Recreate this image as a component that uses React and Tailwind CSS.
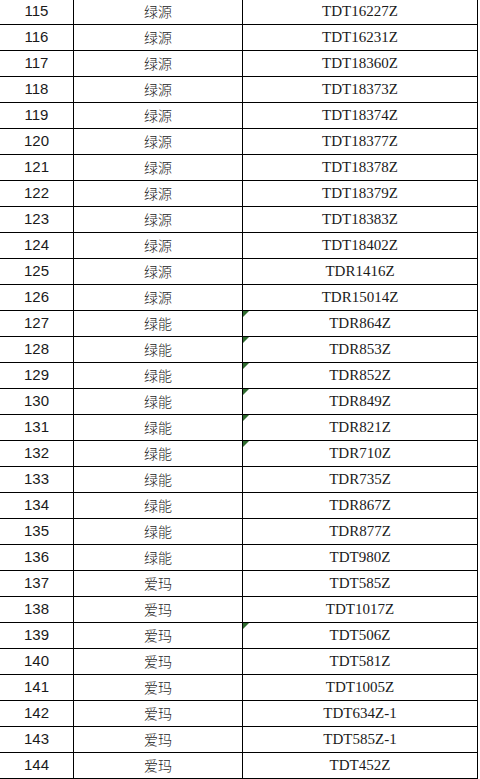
import React from "react";

const rows = [
  [115, "绿源", "TDT16227Z"],
  [116, "绿源", "TDT16231Z"],
  [117, "绿源", "TDT18360Z"],
  [118, "绿源", "TDT18373Z"],
  [119, "绿源", "TDT18374Z"],
  [120, "绿源", "TDT18377Z"],
  [121, "绿源", "TDT18378Z"],
  [122, "绿源", "TDT18379Z"],
  [123, "绿源", "TDT18383Z"],
  [124, "绿源", "TDT18402Z"],
  [125, "绿源", "TDR1416Z"],
  [126, "绿源", "TDR15014Z"],
  [127, "绿能", "TDR864Z", true],
  [128, "绿能", "TDR853Z", true],
  [129, "绿能", "TDR852Z", true],
  [130, "绿能", "TDR849Z", true],
  [131, "绿能", "TDR821Z", true],
  [132, "绿能", "TDR710Z", true],
  [133, "绿能", "TDR735Z"],
  [134, "绿能", "TDR867Z"],
  [135, "绿能", "TDR877Z"],
  [136, "绿能", "TDT980Z"],
  [137, "爱玛", "TDT585Z"],
  [138, "爱玛", "TDT1017Z"],
  [139, "爱玛", "TDT506Z", true],
  [140, "爱玛", "TDT581Z"],
  [141, "爱玛", "TDT1005Z"],
  [142, "爱玛", "TDT634Z-1"],
  [143, "爱玛", "TDT585Z-1"],
  [144, "爱玛", "TDT452Z"],
];

export default function App() {
  return (
    <div className="w-[480px] h-[779px] overflow-hidden bg-white">
      <div className="w-[478px] mt-[-1px] flex flex-col">
        {rows.map(([n, brand, code, mark]) => (
          <div key={n} className="flex h-[26px] border-b border-black text-[#1a1a1a]">
            <div className="w-[74px] shrink-0 border-r border-black flex items-center justify-center text-[15px] font-['Liberation_Sans',sans-serif]">
              {n}
            </div>
            <div className="w-[169px] shrink-0 border-r border-black flex items-center justify-center text-[14px] font-light font-['Noto_Sans_CJK_SC',sans-serif]">
              {brand}
            </div>
            <div className="relative w-[235px] shrink-0 border-r border-black flex items-center justify-center text-[15px] font-['Liberation_Serif',serif]">
              {mark && (
                <svg className="absolute left-0 top-0" width="6" height="6" viewBox="0 0 6 6">
                  <polygon points="0,0 6,0 0,6" fill="#2f6b2f" />
                </svg>
              )}
              {code}
            </div>
          </div>
        ))}
      </div>
    </div>
  );
}
